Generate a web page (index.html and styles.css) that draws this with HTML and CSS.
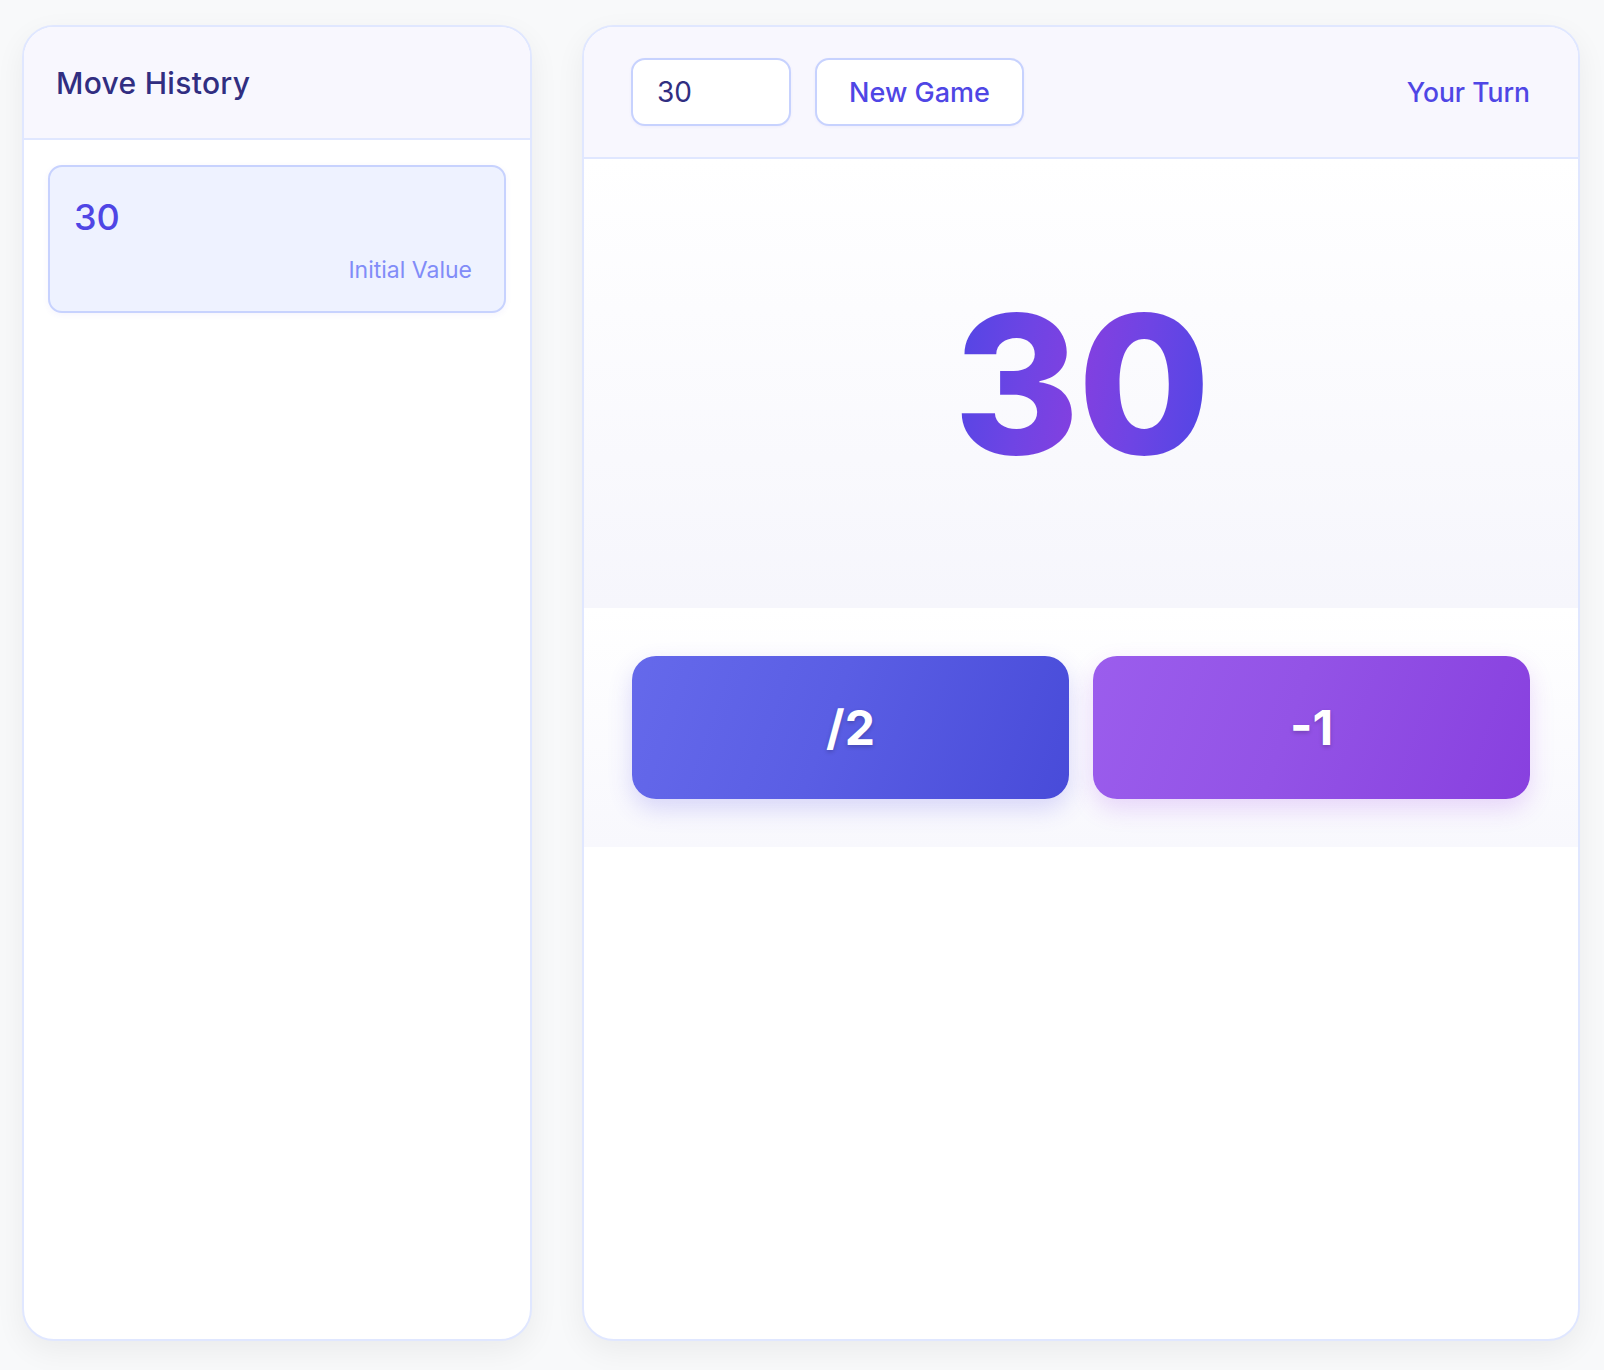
FILE: index.html
```html
<!DOCTYPE html>
<html lang="en">
<head>
<meta charset="utf-8">
<title>Game</title>
<link rel="stylesheet" href="styles.css">
</head>
<body>
<div class="app">
  <aside class="panel history">
    <div class="history-head">Move History</div>
    <div class="history-list">
      <div class="move-card">
        <div class="move-value">30</div>
        <div class="move-label">Initial Value</div>
      </div>
    </div>
  </aside>
  <main class="panel game">
    <div class="game-head">
      <div class="start-input">30</div>
      <button class="new-game">New Game</button>
      <div class="turn">Your Turn</div>
    </div>
    <div class="display">
      <div class="big-number">30</div>
    </div>
    <div class="actions">
      <button class="action half">/2</button>
      <button class="action minus">-1</button>
    </div>
  </main>
</div>
</body>
</html>
```

FILE: styles.css
```css
* { box-sizing: border-box; }
html, body { margin: 0; padding: 0; }
body {
  background: #f8f9fa;
  font-family: Inter, "Noto Sans", sans-serif;
  width: 1604px;
  height: 1370px;
}
.app {
  display: grid;
  grid-template-columns: 510px 998px;
  column-gap: 50px;
  padding: 25px 24px 29px 22px;
  height: 1370px;
}
.panel {
  background: #fff;
  border: 2px solid #e0e7ff;
  border-radius: 32px;
  box-shadow: 0 10px 30px rgba(0, 0, 0, 0.06);
  overflow: hidden;
  display: flex;
  flex-direction: column;
}
.history-head {
  background: #f8f7fe;
  border-bottom: 2px solid #e0e7ff;
  padding: 33px 32px 32px;
  font-size: 30px;
  line-height: 46px;
  font-weight: 500;
  color: #312e81;
  letter-spacing: 0.3px;
}
.history-list {
  padding: 25px 24px;
}
.move-card {
  background: #eef2ff;
  border: 2px solid #c7d2fe;
  border-radius: 14px;
  padding: 28px 32px 26px 24px;
  box-shadow: 0 2px 6px rgba(79, 70, 229, 0.06);
}
.move-value {
  font-size: 36px;
  line-height: 44px;
  color: #4f46e5;
  font-weight: 500;
}
.move-label {
  margin-top: 16px;
  text-align: right;
  font-size: 23px;
  line-height: 30px;
  color: #818cf8;
}
.game-head {
  background: #f8f7fe;
  border-bottom: 2px solid #e0e7ff;
  padding: 31px 48px 31px 47px;
  display: flex;
  align-items: center;
  gap: 24px;
}
.start-input {
  width: 160px;
  height: 68px;
  background: #fff;
  border: 2px solid #c7d2fe;
  border-radius: 14px;
  padding: 0 24px;
  display: flex;
  align-items: center;
  font-size: 28px;
  color: #312e81;
  box-shadow: 0 1px 3px rgba(79, 70, 229, 0.06);
}
.new-game {
  width: 209px;
  height: 68px;
  background: #fff;
  border: 2px solid #c7d2fe;
  border-radius: 14px;
  font-family: inherit;
  font-size: 27px;
  font-weight: 500;
  color: #4f46e5;
  box-shadow: 0 1px 3px rgba(79, 70, 229, 0.06);
}
.turn {
  margin-left: auto;
  font-size: 26.5px;
  font-weight: 500;
  color: #4f46e5;
}
.display {
  height: 449px;
  background: linear-gradient(to bottom, #ffffff, #f6f6fc);
  display: flex;
  align-items: center;
  justify-content: center;
}
.big-number {
  font-size: 192px;
  line-height: 1;
  font-weight: 800;
  letter-spacing: -2px;
  background: linear-gradient(100deg, #4f46e5 0%, #6f44e4 30%, #8240e0 50%, #6f44e4 70%, #4f46e5 100%);
  -webkit-background-clip: text;
  background-clip: text;
  color: transparent;
}
.actions {
  padding: 48px;
  background: linear-gradient(to bottom, #ffffff, #f8f8fd);
  display: grid;
  grid-template-columns: 1fr 1fr;
  gap: 24px;
}
.action {
  height: 143px;
  border: none;
  border-radius: 24px;
  font-family: inherit;
  font-size: 48px;
  font-weight: 700;
  color: #fff;
  text-shadow: 0 2px 4px rgba(0, 0, 0, 0.2);
}
.half {
  background: linear-gradient(110deg, #6569eb 0%, #5a5ee4 45%, #484bd9 100%);
  box-shadow: 0 10px 25px rgba(79, 70, 229, 0.2);
}
.minus {
  background: linear-gradient(110deg, #9b5ded 0%, #9353e6 45%, #8840df 100%);
  box-shadow: 0 10px 25px rgba(147, 51, 234, 0.18);
}
```
